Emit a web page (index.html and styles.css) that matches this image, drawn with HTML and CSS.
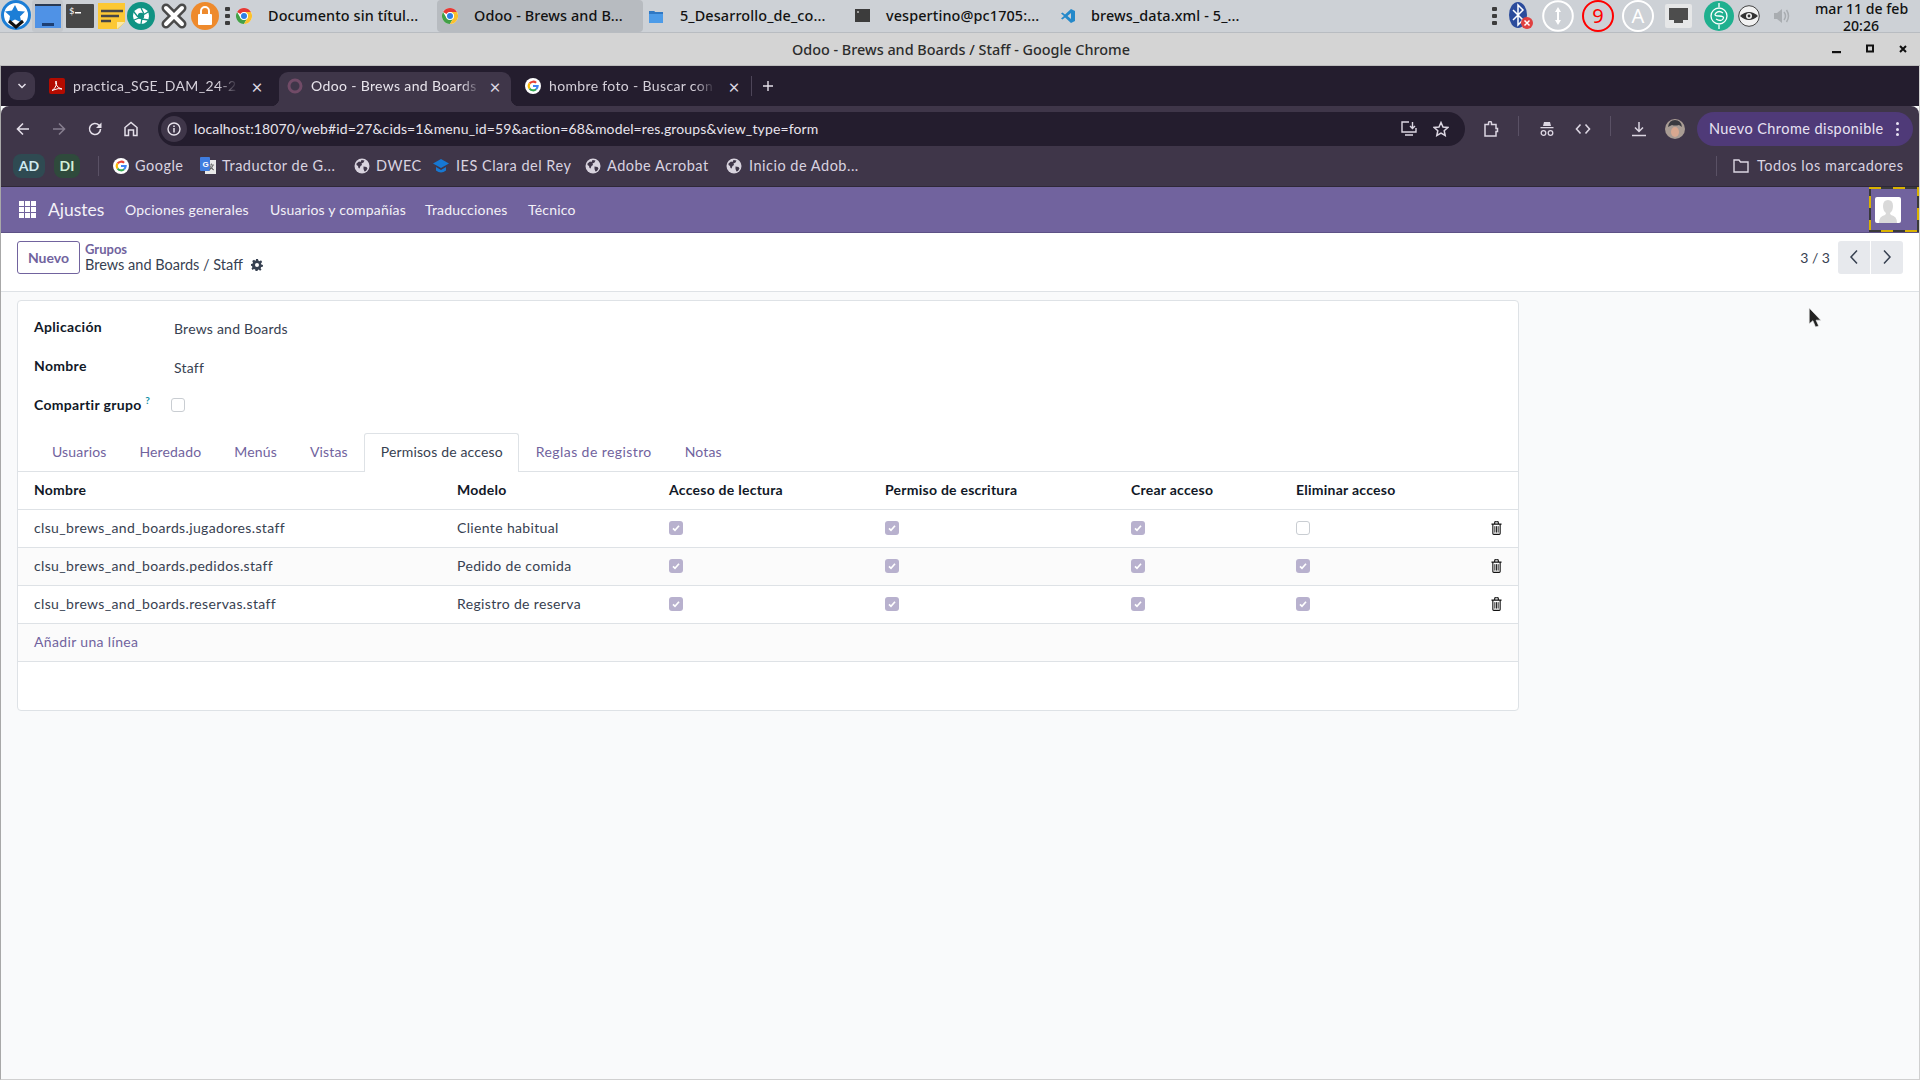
FILE: index.html
```html
<!DOCTYPE html>
<html lang="es">
<head>
<meta charset="utf-8">
<title>Odoo - Brews and Boards / Staff</title>
<link rel="stylesheet" href="styles.css">
</head>
<body>
<svg class="defs" width="0" height="0" aria-hidden="true">
  <symbol id="chrome" viewBox="0 0 24 24">
    <circle cx="12" cy="12" r="12" fill="#fff"/>
    <path fill="#e53935" d="M12 0a12 12 0 0 1 10.4 6H12a6 6 0 0 0-5.2 3L1.6 6A12 12 0 0 1 12 0z"/>
    <path fill="#43a047" d="M1.6 6A12 12 0 0 0 12 24l5.2-9a6 6 0 0 1-10.4 0z"/>
    <path fill="#fbc02d" d="M22.4 6A12 12 0 0 1 12 24l5.2-9a6 6 0 0 0-5.2-9z"/>
    <circle cx="12" cy="12" r="5.8" fill="#fff"/><circle cx="12" cy="12" r="4.5" fill="#2f7fe6"/>
  </symbol>
  <symbol id="google" viewBox="0 0 24 24">
    <circle cx="12" cy="12" r="12" fill="#fff"/>
    <g fill="none" stroke-width="3.2">
      <path stroke="#ea4335" d="M6.9 8.1A6.8 6.8 0 0 1 16.7 7.2"/>
      <path stroke="#fbbc05" d="M6.9 8.1a6.8 6.8 0 0 0 0 7.8"/>
      <path stroke="#34a853" d="M6.9 15.900a6.800 6.800 0 0 0 9.800 .9"/>
      <path stroke="#4285f4" d="M12 12h7a7 7 0 0 1-2.300 4.800"/>
    </g>
  </symbol>
  <symbol id="globe" viewBox="0 0 16 16">
    <circle cx="8" cy="8" r="7.500" fill="#d8d3de"/>
    <path fill="#3f3649" d="M2.500 5.500 5 3.500l1.500.5 1-2 3 .5-1 2-2 1 .5 1.500-1.500 1-1 2.500-1-.5-.5-2-1.500-1zM9.500 8.500l3 .5 1 1.500-1.500 2.500-1.500.5-1-2.500z"/>
  </symbol>
  <symbol id="chk" viewBox="0 0 14 14">
    <rect width="14" height="14" rx="3" fill="#b8b1ce"/>
    <path d="M4 7.300 6 9.300 10 4.800" fill="none" stroke="#fff" stroke-width="1.700"/>
  </symbol>
  <symbol id="trash" viewBox="0 0 12 15">
    <path fill="none" stroke="#111" stroke-width="1.200" d="M.5 3.300h11M2 3.300v10.200a1 1 0 0 0 1 1h6a1 1 0 0 0 1-1V3.300M4 3.200V1.500A1 1 0 0 1 5 .6h2a1 1 0 0 1 1 .9v1.700"/>
    <path fill="none" stroke="#111" stroke-width="1" d="M4.200 5.500v7M6 5.500v7M7.800 5.500v7"/>
  </symbol>
</svg>

<header class="panel">
  <svg class="pi star" viewBox="0 0 32 32"><circle cx="16" cy="15" r="13.500" fill="#fff" stroke="#1c7ed6" stroke-width="3"/><path fill="#1c7ed6" d="m15 5 3 6 7 .5-5 5 1.500 6-6.500-3-6 3 1-6.500-5-4.500 7-1z"/><path fill="none" stroke="#111" stroke-width="3" d="m9 21 7 6 7-6"/></svg>
  <span class="win-hover"><svg class="pi winico" viewBox="0 0 26 24"><rect width="26" height="24" fill="#4f92e6"/><rect width="26" height="2" fill="#2a3a52"/><rect x="7" y="19" width="12" height="3" fill="#1d3f73"/></svg></span>
  <svg class="pi term" viewBox="0 0 28 24"><rect width="28" height="24" rx="1" fill="#474747"/><text x="3" y="10" class="term-t">$</text><rect x="9" y="8" width="6" height="1.500" fill="#fff"/></svg>
  <svg class="pi notes" viewBox="0 0 27 26"><path fill="#fcc834" d="M0 0h27v19l-7 7H0z"/><path fill="#fbe9a6" d="m27 19-8 7v-7z"/><path stroke="#474747" stroke-width="2.400" d="M3 8h22M3 13h18M3 18h10"/></svg>
  <svg class="pi aper" viewBox="0 0 28 28"><circle cx="14" cy="14" r="14" fill="#109383"/><circle cx="14" cy="14" r="8" fill="#fff"/><circle cx="14" cy="14" r="3.200" fill="#109383"/><path stroke="#109383" stroke-width="1.300" d="m14 6 3 6M21 10l-5 3M21 18l-6-1M14 22l1-6M7 18l5-2M7 10l4 5"/></svg>
  <svg class="pi xico" viewBox="0 0 26 26"><path stroke="#4a4a4a" stroke-width="9" stroke-linecap="round" d="m5 5 16 16M21 5 5 21"/><path stroke="#fff" stroke-width="4" stroke-linecap="round" d="m5 5 16 16M21 5 5 21"/></svg>
  <svg class="pi lock" viewBox="0 0 28 28"><circle cx="14" cy="14" r="14" fill="#ee8a2c"/><rect x="7" y="12" width="14" height="11" rx="1" fill="#fff"/><path fill="none" stroke="#fff" stroke-width="2" d="M10 12V9a4 4 0 0 1 8 0v3"/></svg>
  <span class="dots dots-l"><i></i><i></i><i></i></span>
  <svg class="pi tchrome"><use href="#chrome"/></svg>
  <span class="task t-doc">Documento sin títul...</span>
  <span class="task-active"><svg class="pi tchrome2"><use href="#chrome"/></svg><span class="task t-odoo">Odoo - Brews and B...</span></span>
  <svg class="pi tfolder" viewBox="0 0 14 14"><path fill="#4c9be8" d="M0 2h5l1 1h8v11H0z"/><path fill="#2f78c4" d="M0 2h5l1 1h8v2H0z"/></svg>
  <span class="task t-des">5_Desarrollo_de_co...</span>
  <svg class="pi tterm" viewBox="0 0 15 13"><rect width="15" height="13" fill="#3c3c3c"/><path stroke="#fff" d="M2 3h2"/></svg>
  <span class="task t-ves">vespertino@pc1705:...</span>
  <svg class="pi tcode" viewBox="0 0 14 14"><path fill="#2489ca" d="M10 0 14 2v10l-4 2-6-5.500L1.500 10.500 0 9.500 3 7 0 4.500l1.500-1L4 5.500zM10 4 6.500 7 10 10z"/></svg>
  <span class="task t-bre">brews_data.xml - 5_...</span>
  <span class="dots dots-r"><i></i><i></i><i></i></span>
  <svg class="pi bt" viewBox="0 0 26 28"><ellipse cx="10" cy="13" rx="9" ry="13" fill="#2c4c9c"/><path fill="none" stroke="#fff" stroke-width="1.500" d="m5 8 10 10-5 5V3l5 5L5 18"/><circle cx="19" cy="21" r="6" fill="#e04040"/><path stroke="#fff" stroke-width="1.500" d="m16.500 18.500 5 5M21.500 18.500l-5 5"/></svg>
  <svg class="pi ring r1" viewBox="0 0 32 32"><circle cx="16" cy="16" r="14.800" fill="none" stroke="#fff" stroke-width="2"/><path fill="#fff" d="M16 7l3 5h-2v8h2l-3 5-3-5h2v-8h-2z"/></svg>
  <span class="ringt r9">9</span>
  <span class="ringt ra">A</span>
  <svg class="pi net" viewBox="0 0 27 24"><rect width="27" height="24" rx="2" fill="#e6e7e8"/><path fill="#4d4d4d" d="M4 4h19v12h-5v3h-9v-3H4z"/></svg>
  <svg class="pi sico" viewBox="0 0 30 30"><circle cx="15" cy="15" r="15" fill="#1fb08f"/><circle cx="15" cy="15" r="8" fill="none" stroke="#fff" stroke-width="1.300"/><path fill="none" stroke="#fff" stroke-width="1.300" d="M19 12q-4-3-7 0t3 3 4 3-7 0M15 2v4M15 24v4"/></svg>
  <svg class="pi eye" viewBox="0 0 22 22"><circle cx="11" cy="11" r="10.300" fill="#f2f2f2" stroke="#444"/><path fill="#333" d="M2 11q9-8 18 0-9 8-18 0z"/><circle cx="11" cy="11" r="3" fill="#f2f2f2"/><circle cx="11" cy="11" r="1.400" fill="#333"/></svg>
  <svg class="pi spk" viewBox="0 0 16 16"><path fill="#a9adb1" d="M0 5h3l5-4v14l-5-4H0z"/><path fill="none" stroke="#a9adb1" stroke-width="1.500" d="M10 4q3 4 0 8M12.500 2q4 6 0 12"/></svg>
  <span class="clock">mar 11 de feb<br>20:26</span>
</header>

<div class="titlebar">
  <span class="wtitle">Odoo - Brews and Boards / Staff - Google Chrome</span>
  <span class="wbtns">
    <svg viewBox="0 0 10 10"><rect x="0" y="7" width="9" height="2.200" fill="#111"/></svg>
    <svg viewBox="0 0 10 10"><rect x="2" y="1.500" width="6" height="6" fill="none" stroke="#111" stroke-width="2"/></svg>
    <svg viewBox="0 0 10 10"><path stroke="#111" stroke-width="2" d="m2 2 6 6M8 2 2 8"/></svg>
  </span>
</div>

<div class="window">
  <div class="tabstrip">
    <span class="tabdrop"><svg viewBox="0 0 10 6"><path fill="none" stroke="#e4dfe9" stroke-width="1.500" d="m1.500 1 3.500 3.500L8.500 1"/></svg></span>
    <div class="tab tab1">
      <svg class="favi" viewBox="0 0 16 16"><rect width="16" height="16" rx="2" fill="#b30b00"/><path fill="none" stroke="#fff" stroke-width="1" d="M3 12.500q3-1.500 4.500-6 0-3-.5-3.500-1 1 0 3.500 2 4 6 4.500-4-1-7 .5z"/></svg>
      <span class="tabt">practica_SGE_DAM_24-25</span><span class="tabx">×</span>
    </div>
    <div class="tab tab2">
      <svg class="favi" viewBox="0 0 16 16"><circle cx="8" cy="8" r="6" fill="none" stroke="#714b67" stroke-width="3"/></svg>
      <span class="tabt">Odoo - Brews and Boards</span><span class="tabx">×</span>
    </div>
    <div class="tab tab3">
      <svg class="favi"><use href="#google"/></svg>
      <span class="tabt">hombre foto - Buscar con Google</span><span class="tabx">×</span>
    </div>
    <span class="tabsep"></span>
    <svg class="tabplus" viewBox="0 0 12 12"><path stroke="#e4dfe9" stroke-width="1.400" d="M6 1v10M1 6h10"/></svg>
  </div>

  <div class="toolbar">
    <svg class="tb back" viewBox="0 0 16 16"><path fill="none" stroke="#e4dfe9" stroke-width="1.600" d="M14 8H2.500M8 2.500 2.500 8 8 13.500"/></svg>
    <svg class="tb fwd" viewBox="0 0 16 16"><path fill="none" stroke="#857d8e" stroke-width="1.600" d="M2 8h11.500M8 2.500 13.500 8 8 13.500"/></svg>
    <svg class="tb rel" viewBox="0 0 16 16"><path fill="none" stroke="#e4dfe9" stroke-width="1.600" d="M13.500 8a5.500 5.500 0 1 1-1.600-3.900L13.500 6"/><path fill="#e4dfe9" d="M14.500 1.500v5.500H9z"/></svg>
    <svg class="tb home" viewBox="0 0 16 16"><path fill="none" stroke="#e4dfe9" stroke-width="1.500" d="M2 14.500V6.500L8 1.500l6 5v8h-3.500V9h-5v5.500z"/></svg>
    <div class="omni">
      <span class="siteinfo"><svg viewBox="0 0 14 14"><circle cx="7" cy="7" r="6" fill="none" stroke="#e8e3ec" stroke-width="1.400"/><path stroke="#e8e3ec" stroke-width="1.500" d="M7 6v4.500M7 3.500V5"/></svg></span>
      <span class="url">localhost:18070/web#id=27&amp;cids=1&amp;menu_id=59&amp;action=68&amp;model=res.groups&amp;view_type=form</span>
      <svg class="om install" viewBox="0 0 16 16"><path fill="none" stroke="#dcd6e2" stroke-width="1.400" d="M8 1H1v10h14V7M4 14h8"/><path fill="none" stroke="#dcd6e2" stroke-width="1.400" d="M11.500 1v6M9 5l2.500 2.500L14 5"/></svg>
      <svg class="om starb" viewBox="0 0 16 16"><path fill="none" stroke="#dcd6e2" stroke-width="1.500" d="m8 1.500 2 4.500 4.800.5-3.600 3.200 1 4.800L8 12.100l-4.200 2.400 1-4.800L1.200 6.500 6 6z"/></svg>
    </div>
    <svg class="tb puzzle" viewBox="0 0 16 16"><path fill="none" stroke="#dcd6e2" stroke-width="1.500" d="M2 3.500h3.500V2a1.500 1.500 0 0 1 3 0v1.500H13v4h1.500v3H13v4.500H2z"/></svg>
    <span class="tsep s1"></span>
    <svg class="tb incog" viewBox="0 0 16 16"><path fill="#dcd6e2" d="M5 1h6l1 4H4zM1.500 6h13v1.300h-13z"/><circle cx="4.500" cy="12" r="2.300" fill="none" stroke="#dcd6e2" stroke-width="1.300"/><circle cx="11.500" cy="12" r="2.300" fill="none" stroke="#dcd6e2" stroke-width="1.300"/></svg>
    <svg class="tb codeb" viewBox="0 0 16 16"><path fill="none" stroke="#dcd6e2" stroke-width="1.600" d="M5.500 3.500 1.500 8l4 4.500M10.500 3.500l4 4.500-4 4.500"/></svg>
    <span class="tsep s2"></span>
    <svg class="tb down" viewBox="0 0 16 16"><path fill="none" stroke="#dcd6e2" stroke-width="1.500" d="M8 1v9.500M4 6.500l4 4 4-4M1 14.500h14"/></svg>
    <svg class="prof" viewBox="0 0 20 20"><circle cx="10" cy="10" r="10" fill="#a99c94"/><path fill="#3a3a40" d="M3 8q1-7 7-7t7 7l-3-2q-4 1-7 0z"/><ellipse cx="10" cy="13" rx="4" ry="5" fill="#d9a890"/></svg>
    <div class="pill"><span class="pilltxt">Nuevo Chrome disponible</span><span class="pilldots"><i></i><i></i><i></i></span></div>
  </div>

  <div class="bookmarks">
    <span class="chip chip-ad">AD</span>
    <span class="chip chip-di">DI</span>
    <span class="bsep"></span>
    <svg class="bi bi-g"><use href="#google"/></svg><span class="bm bm-g">Google</span>
    <svg class="bi bi-t" viewBox="0 0 16 18"><rect x="5" y="3" width="11" height="14" fill="#e8e8e8"/><rect width="10" height="14" rx="1" fill="#3f7de0"/><text x="2.500" y="10" class="gt">G</text><path stroke="#777" d="M9 8h5M11.500 6.500V8M13 8q-1 4-4 5M10 9q1 3 4 4"/></svg><span class="bm bm-t">Traductor de G...</span>
    <svg class="bi bi-w1"><use href="#globe"/></svg><span class="bm bm-d">DWEC</span>
    <svg class="bi bi-c" viewBox="0 0 16 16"><path fill="#1778d2" d="M8 1 16 5.500 8 10 0 5.500z"/><path fill="#1778d2" d="M3 9v3.500q5 4 10 0V9l-5 3z"/></svg><span class="bm bm-i">IES Clara del Rey</span>
    <svg class="bi bi-w2"><use href="#globe"/></svg><span class="bm bm-a">Adobe Acrobat</span>
    <svg class="bi bi-w3"><use href="#globe"/></svg><span class="bm bm-n">Inicio de Adob...</span>
    <span class="bsep bsep2"></span>
    <svg class="bi bi-f" viewBox="0 0 16 14"><path fill="none" stroke="#dcd6e2" stroke-width="1.400" d="M1 1h5l1.500 2H15v10H1z"/></svg><span class="bm bm-all">Todos los marcadores</span>
  </div>

  <nav class="navbar">
    <span class="apps"><i></i><i></i><i></i><i></i><i></i><i></i><i></i><i></i><i></i></span>
    <span class="brand">Ajustes</span>
    <span class="menu m1">Opciones generales</span>
    <span class="menu m2">Usuarios y compañías</span>
    <span class="menu m3">Traducciones</span>
    <span class="menu m4">Técnico</span>
    <span class="userbox"><svg viewBox="0 0 26 26"><rect width="26" height="26" rx="2" fill="#fff"/><path fill="#d9d9d9" d="M4 26q0-7 6-8 1-1 1-2-3-2-3-7 0-6 5-6t5 6q0 5-3 7 0 1 1 2 6 1 6 8z"/></svg></span>
  </nav>

  <div class="control">
    <button class="btn-new">Nuevo</button>
    <div class="crumbs">
      <span class="crumb">Grupos</span>
      <span class="crumb-cur">Brews and Boards / Staff
        <svg class="gear" viewBox="0 0 12 12"><path fill="#374151" d="M5 0h2l.3 1.600 1.300.6L10 1.300 11.200 3 10 4.200l.3 1.300L12 6l-.2 1.800-1.600.3-.6 1.200.9 1.400L9 11.700 7.800 10.600 6.800 11 6.500 12h-2l-.3-1.400-1.300-.6-1.300.9L.5 9.400l.9-1.200L1 7 0 6.800V5l1.500-.3.500-1.200L1.200 2 3 .8l1.200 1 .6-.3zM6 4a2 2 0 1 0 0 4 2 2 0 0 0 0-4z"/></svg>
      </span>
    </div>
    <span class="pager">3 / 3</span>
    <span class="pbtns">
      <span class="pbtn"><svg viewBox="0 0 10 16"><path fill="none" stroke="#374151" stroke-width="1.500" d="M8 1.500 2 8l6 6.500"/></svg></span>
      <span class="pbtn"><svg viewBox="0 0 10 16"><path fill="none" stroke="#374151" stroke-width="1.500" d="m2 1.500 6 6.500-6 6.500"/></svg></span>
    </span>
  </div>

  <main class="content">
    <section class="card">
      <div class="fields">
        <div class="frow"><label class="flabel">Aplicación</label><span class="fval">Brews and Boards</span></div>
        <div class="frow"><label class="flabel">Nombre</label><span class="fval">Staff</span></div>
        <div class="frow"><label class="flabel">Compartir grupo <sup class="help">?</sup></label><span class="box-empty box-share"></span></div>
      </div>
      <div class="tabs">
        <span class="ftab">Usuarios</span>
        <span class="ftab">Heredado</span>
        <span class="ftab">Menús</span>
        <span class="ftab">Vistas</span>
        <span class="ftab active">Permisos de acceso</span>
        <span class="ftab ftab-reg">Reglas de registro</span>
        <span class="ftab">Notas</span>
      </div>
      <table class="list">
        <colgroup><col class="c1"><col class="c2"><col class="c3"><col class="c4"><col class="c5"><col class="c6"><col class="c7"></colgroup>
        <thead><tr><th>Nombre</th><th>Modelo</th><th>Acceso de lectura</th><th>Permiso de escritura</th><th>Crear acceso</th><th>Eliminar acceso</th><th></th></tr></thead>
        <tbody>
          <tr><td>clsu_brews_and_boards.jugadores.staff</td><td>Cliente habitual</td><td><svg class="cb"><use href="#chk"/></svg></td><td><svg class="cb"><use href="#chk"/></svg></td><td><svg class="cb"><use href="#chk"/></svg></td><td><span class="box-empty"></span></td><td class="del"><svg class="tr"><use href="#trash"/></svg></td></tr>
          <tr class="alt"><td>clsu_brews_and_boards.pedidos.staff</td><td>Pedido de comida</td><td><svg class="cb"><use href="#chk"/></svg></td><td><svg class="cb"><use href="#chk"/></svg></td><td><svg class="cb"><use href="#chk"/></svg></td><td><svg class="cb"><use href="#chk"/></svg></td><td class="del"><svg class="tr"><use href="#trash"/></svg></td></tr>
          <tr><td>clsu_brews_and_boards.reservas.staff</td><td>Registro de reserva</td><td><svg class="cb"><use href="#chk"/></svg></td><td><svg class="cb"><use href="#chk"/></svg></td><td><svg class="cb"><use href="#chk"/></svg></td><td><svg class="cb"><use href="#chk"/></svg></td><td class="del"><svg class="tr"><use href="#trash"/></svg></td></tr>
          <tr class="alt"><td colspan="7" class="addline">Añadir una línea</td></tr>
        </tbody>
      </table>
    </section>
  </main>
  <svg class="cursor" viewBox="0 0 13 20"><path fill="#222" stroke="#eee" stroke-width=".6" d="M1 1v15l3.500-3 2.500 6 3-1-2.500-5.500H12z"/></svg>
</div>
</body>
</html>
```

FILE: styles.css
```css
* { box-sizing: border-box; }
html, body { margin: 0; height: 100%; }
body {
  width: 1920px; height: 1080px; overflow: hidden;
  display: flex; flex-direction: column;
  font-family: "Lato", "Noto Sans", sans-serif; font-size: 14px; color: #374151;
  background: #f9fafb;
}
.defs { position: absolute; }
svg { display: block; flex: none; }

/* ---- desktop panel ---- */
.panel { height: 33px; flex: none; display: flex; align-items: center; background: #cdd1d6; border-bottom: 1px solid #b8bcc1; padding: 0 13px 1px 0; }
.pi { flex: none; }
.star { width: 32px; height: 32px; }
.win-hover { flex: none; width: 31px; height: 32px; display: flex; align-items: center; justify-content: center; background: #c3c7cc; border-radius: 3px; }
.winico { width: 26px; height: 24px; }
.term { width: 28px; height: 24px; margin-left: 3px; }
.term-t { font: 9px "DejaVu Sans Mono", monospace; fill: #fff; }
.notes { width: 27px; height: 26px; margin-left: 4px; }
.aper { width: 28px; height: 28px; margin-left: 2px; }
.xico { width: 26px; height: 26px; margin-left: 6px; }
.lock { width: 28px; height: 28px; margin-left: 4px; }
.dots { display: flex; flex-direction: column; gap: 3px; width: 5px; flex: none; }
.dots i { display: block; width: 5px; height: 4px; background: #3c3c3c; border-radius: 1px; }
.dots-l { margin-left: 6px; }
.tchrome { width: 16px; height: 16px; margin-left: 6px; }
.task { flex: none; font-family: "Noto Sans", sans-serif; font-size: 14.4px; font-weight: 500; color: #111; white-space: nowrap; letter-spacing: .12px; }
.t-doc { width: 169px; margin-left: 16px; }
.task-active { width: 206px; height: 32px; background: #b7bbc0; border-radius: 4px; display: flex; align-items: center; flex: none; }
.tchrome2 { width: 16px; height: 16px; margin-left: 5px; }
.t-odoo { margin-left: 16px; }
.tfolder { width: 14px; height: 14px; margin-left: 6px; }
.t-des { width: 175px; margin-left: 17px; }
.tterm { width: 15px; height: 13px; }
.t-ves { width: 192px; margin-left: 16px; }
.tcode { width: 14px; height: 14px; margin-left: -17px; }
.t-bre { width: 148px; margin-left: 16px; }
.dots-r { margin-left: auto; }
.bt { width: 26px; height: 28px; margin-left: 11px; }
.r1 { width: 32px; height: 32px; margin-left: 8px; }
.ringt { flex: none; width: 32px; height: 32px; border-radius: 50%; border: 2px solid #fff; display: flex; align-items: center; justify-content: center; font-size: 20px; color: #fff; }
.r9 { border-color: #f00; color: #f00; margin-left: 8px; font-family: "Noto Sans", sans-serif; }
.ra { margin-left: 8px; font-family: "Noto Sans", sans-serif; }
.net { width: 27px; height: 24px; margin-left: 11px; }
.sico { width: 30px; height: 30px; margin-left: 12px; }
.eye { width: 22px; height: 22px; margin-left: 4px; }
.spk { width: 16px; height: 16px; margin-left: 14px; }
.clock { flex: none; width: 92px; margin-left: 25px; padding-top: 3px; font-family: "Noto Sans", sans-serif; font-size: 14.100px; font-weight: 500; line-height: 17px; color: #111; text-align: center; white-space: nowrap; }

.titlebar { height: 33px; flex: none; display: flex; align-items: center; background: #d4d4d4; border-bottom: 1px solid #bcbcbc; }
.wtitle { width: 1922px; margin-right: -90px; flex: none; text-align: center; font-family: "Noto Sans", sans-serif; font-size: 14.4px; font-weight: 500; color: #2c2c2c; }
.wbtns { display: flex; gap: 23px; width: 76px; flex: none; }
.wbtns svg { width: 10px; height: 10px; }

/* ---- browser frame ---- */
.window { flex: 1; min-height: 0; display: flex; flex-direction: column; position: relative; border-left: 1px solid #a8a8a8; border-right: 1px solid #d0d0d0; border-bottom: 1px solid #d0d0d0; }
.tabstrip { height: 40px; flex: none; display: flex; align-items: flex-end; background: #241d2e; padding-left: 7px; }
.tabdrop { flex: none; width: 27px; height: 28px; margin-bottom: 6px; background: #3f3649; border-radius: 9px; display: flex; align-items: center; justify-content: center; }
.tabdrop svg { width: 10px; height: 6px; }
.tab { height: 34px; padding-bottom: 6px; display: flex; align-items: center; position: relative; color: #d5d0da; flex: none; }
.tabt { overflow: hidden; white-space: nowrap; flex: none; font-size: 14px; letter-spacing: .35px; margin-bottom: 2px; -webkit-mask-image: linear-gradient(90deg,#000 88%,transparent); mask-image: linear-gradient(90deg,#000 88%,transparent); }
.favi { width: 16px; height: 16px; flex: none; }
.tabx { font-size: 19px; line-height: 1; color: #dcd7e1; width: 14px; text-align: center; flex: none; }
.tab1 { width: 244px; padding-left: 14px; }
.tab1 .tabt { width: 165px; margin-left: 8px; }
.tab1 .tabx { margin-left: 12px; }
.tab2 { width: 232px; background: #3f3649; border-radius: 9px 9px 0 0; padding-left: 8px; color: #e8e4ec; }
.tab2::before, .tab2::after { content: ""; position: absolute; bottom: 0; width: 8px; height: 8px; }
.tab2::before { left: -8px; background: radial-gradient(circle at 0 0, #241d2e 8px, #3f3649 8.5px); }
.tab2::after { right: -8px; background: radial-gradient(circle at 100% 0, #241d2e 8px, #3f3649 8.5px); }
.tab2 .tabt { width: 170px; margin-left: 8px; }
.tab2 .tabx { margin-left: 7px; }
.tab3 { width: 232px; padding-left: 14px; }
.tab3 .tabt { width: 166px; margin-left: 8px; }
.tab3 .tabx { margin-left: 12px; }
.tabsep { flex: none; width: 1px; height: 20px; background: #4d4558; margin: 0 0 10px 8px; }
.tabplus { width: 12px; height: 12px; margin: 0 0 14px 10px; }

.toolbar { height: 40px; flex: none; display: flex; align-items: flex-end; background: #3f3649; border-radius: 8px 8px 0 0; }
.toolbar > svg { margin-bottom: 9px; }
.tb { width: 16px; height: 16px; }
.back { margin-left: 14px; }
.fwd { margin-left: 20px; }
.rel { margin-left: 20px; }
.home { margin-left: 20px; }
.omni { flex: none; width: 1307px; height: 34px; margin-left: 19px; background: #241d2e; border-radius: 17px; display: flex; align-items: center; padding-left: 3px; }
.siteinfo { width: 26px; height: 26px; border-radius: 50%; background: #3f3649; display: flex; align-items: center; justify-content: center; flex: none; }
.siteinfo svg { width: 14px; height: 14px; }
.url { width: 1206px; margin-left: 7px; padding-bottom: 2px; font-size: 14px; color: #e8e4ec; white-space: nowrap; flex: none; letter-spacing: .13px; }
.om { width: 16px; height: 16px; }
.install { margin-left: 1px; }
.starb { margin-left: 16px; }
.puzzle { margin-left: 18px; }
.tsep { width: 1px; height: 20px; background: #5a5165; margin-bottom: 10px; flex: none; }
.s1 { margin-left: 19px; }
.incog { margin-left: 20px; }
.codeb { margin-left: 20px; }
.s2 { margin-left: 19px; }
.down { margin-left: 20px; }
.toolbar > .prof { width: 20px; height: 20px; margin-left: 18px; margin-bottom: 7px; }
.pill { width: 216px; height: 34px; margin-left: 12px; border-radius: 17px; background: #4f3a78; display: flex; align-items: center; padding-left: 12px; color: #e8e2f3; flex: none; }
.pilltxt { width: 181px; padding-bottom: 1px; font-size: 14.5px; white-space: nowrap; flex: none; letter-spacing: .42px; }
.pilldots { display: flex; flex-direction: column; gap: 2.500px; margin-left: 6px; }
.pilldots i { display: block; width: 3px; height: 3px; background: #e8e2f3; border-radius: 50%; }

.bookmarks { height: 41px; flex: none; display: flex; align-items: center; background: #3f3649; border-bottom: 1px solid #2f2838; color: #d9d3e0; padding-bottom: 1px; }
.chip { flex: none; height: 24px; border-radius: 8px; display: flex; align-items: center; justify-content: center; font-size: 14px; font-weight: 700; }
.chip-ad { width: 32px; margin-left: 12px; background: #2f4a52; color: #cfeaf0; }
.chip-di { width: 26px; margin-left: 9px; background: #2f4a3c; color: #d3f0d8; }
.bsep { width: 1px; height: 20px; background: #5a5165; margin-left: 18px; flex: none; }
.bi { width: 16px; height: 16px; }
.bm { flex: none; font-size: 14.5px; white-space: nowrap; letter-spacing: .5px; }
.bi-g { margin-left: 14px; }
.bm-g { width: 65px; margin-left: 6px; }
.bi-t { height: 18px; }
.gt { font: 700 8px "Liberation Sans", sans-serif; fill: #fff; }
.bm-t { width: 132px; margin-left: 6px; }
.bm-d { width: 57px; margin-left: 6px; }
.bm-i { width: 129px; margin-left: 7px; }
.bm-a { width: 119px; margin-left: 6px; }
.bm-n { width: 111px; margin-left: 7px; }
.bsep2 { margin-left: 856px; }
.bi-f { margin-left: 16px; height: 14px; }
.bm-all { margin-left: 8px; }

/* ---- odoo ---- */
.navbar { height: 46px; flex: none; display: flex; align-items: center; background: #71639e; border-bottom: 1px solid #5d5186; color: #f3f1f8; }
.apps { width: 17px; height: 17px; margin-left: 18px; display: grid; grid-template-columns: repeat(3, 5px); grid-auto-rows: 5px; gap: 1px; flex: none; }
.apps i { background: #fff; }
.brand { margin-left: 12px; width: 77px; font-size: 17.500px; flex: none; }
.menu { font-size: 14px; flex: none; white-space: nowrap; letter-spacing: .2px; }
.m1 { width: 145px; }
.m2 { width: 155px; }
.m3 { width: 103px; }
.m4 { width: 48px; }
.userbox {
  width: 50px; height: 45px; margin-left: auto; margin-right: 0; padding-left: 6px;
  display: flex; align-items: center;
  background:
    repeating-linear-gradient(90deg, #d9b200 0 12px, #3a3a3a 12px 24px) top / 100% 2px no-repeat,
    repeating-linear-gradient(90deg, #3a3a3a 0 12px, #d9b200 12px 24px) bottom / 100% 2px no-repeat,
    repeating-linear-gradient(0deg, #d9b200 0 12px, #3a3a3a 12px 24px) left / 2px 100% no-repeat,
    repeating-linear-gradient(0deg, #3a3a3a 0 12px, #d9b200 12px 24px) right / 2px 100% no-repeat;
}
.userbox svg { width: 26px; height: 26px; }

.control { height: 59px; flex: none; display: flex; align-items: center; background: #fff; border-bottom: 1px solid #dee2e6; padding: 0 16px 10px; }
.btn-new { width: 63px; height: 33px; padding: 0; background: #fff; border: 1px solid #71639e; border-radius: 3px; color: #71639e; font: 700 14px "Lato", sans-serif; flex: none; }
.crumbs { margin-left: 5px; display: flex; flex-direction: column; line-height: 16px; }
.crumb { font-size: 13px; font-weight: 700; color: #71639e; }
.crumb-cur { font-size: 14.500px; color: #374151; display: flex; align-items: center; gap: 9px; }
.gear { width: 12px; height: 12px; margin-left: -1px; }
.pager { margin-left: auto; font-size: 14px; }
.pbtns { display: flex; gap: 1px; margin-left: 8px; }
.pbtn { width: 32px; height: 33px; background: #e7e9ed; display: flex; align-items: center; justify-content: center; }
.pbtn:first-child { border-radius: 3px 0 0 3px; }
.pbtn:last-child { border-radius: 0 3px 3px 0; }
.pbtn svg { width: 10px; height: 16px; }

.content { flex: 1; min-height: 0; padding: 8px 0 0 16px; }
.card { width: 1502px; height: 411px; background: #fff; border: 1px solid #dee2e6; border-radius: 4px; padding-top: 6px; }
.fields { padding-left: 16px; }
.frow { height: 39px; display: flex; align-items: center; }
.flabel { width: 140px; font-weight: 700; color: #111827; font-size: 14px; flex: none; letter-spacing: .32px; }
.fval { font-size: 14px; padding-top: 4px; letter-spacing: .22px; }
.help { color: #0f8fa8; font-size: 10px; font-weight: 700; line-height: 0; }
.box-empty { display: block; width: 14px; height: 14px; border: 1px solid #c9cdd2; border-radius: 3px; background: #fff; }
.box-share { margin-left: -3px; }

.tabs { margin-top: 9px; height: 39px; display: flex; padding-left: 17.500px; border-bottom: 1px solid #dee2e6; }
.ftab { height: 39px; padding: 0 15.500px 3px; border: 1px solid transparent; border-bottom: 0; display: flex; align-items: center; color: #71639e; font-size: 14px; letter-spacing: .15px; white-space: nowrap; }
.ftab-reg { letter-spacing: .42px; }
.ftab.active { color: #374151; background: #fff; border-color: #dee2e6; border-radius: 3px 3px 0 0; }

.list { width: 1500px; border-collapse: separate; border-spacing: 0; table-layout: fixed; }
.c1 { width: 423px; } .c2 { width: 212px; } .c3 { width: 216px; } .c4 { width: 246px; } .c5 { width: 165px; } .c6 { width: 200px; } .c7 { width: 38px; }
.list th, .list td { height: 38px; padding: 0 0 2px 16px; border-bottom: 1px solid #dee2e6; text-align: left; font-size: 14px; white-space: nowrap; letter-spacing: .35px; }
.list th { font-weight: 700; color: #111827; letter-spacing: .25px; }
.alt td { background: #fbfbfb; }
.cb { width: 14px; height: 14px; }
.list .del { padding-left: 11px; }
.tr { width: 11px; height: 14px; }
.addline { color: #71639e; }
.cursor { position: absolute; left: 1807px; top: 241px; width: 14px; height: 21px; }
```
